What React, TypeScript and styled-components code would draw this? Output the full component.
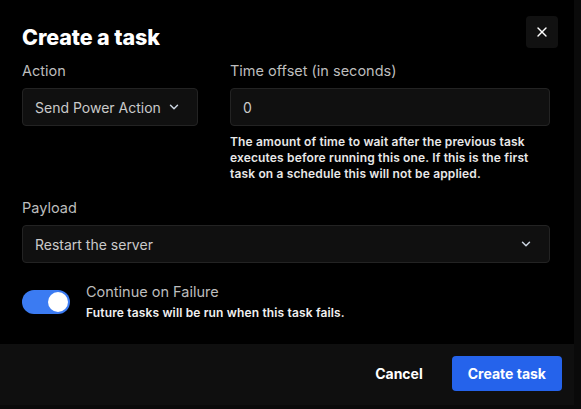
import React, { useState } from 'react';
import styled, { createGlobalStyle } from 'styled-components';
import { ChevronDown, X } from 'lucide-react';

const GlobalStyle = createGlobalStyle`
  html, body {
    margin: 0;
    padding: 0;
    background-color: #0a0a0a;
    font-family: Inter, "Liberation Sans", sans-serif;
    -webkit-font-smoothing: antialiased;
  }
  * {
    box-sizing: border-box;
  }
`;

const Modal = styled.div`
  position: relative;
  width: 574px;
  background-color: #000;
`;

const Body = styled.div`
  padding: 23px 24px 23px 22px;
`;

const Title = styled.h2`
  margin: 0 0 10px 0;
  font-size: 21.5px;
  line-height: 28px;
  font-weight: 800;
  letter-spacing: -0.1px;
  color: #fff;
`;

const CloseButton = styled.button`
  position: absolute;
  top: 16px;
  right: 16px;
  width: 32px;
  height: 32px;
  display: flex;
  align-items: center;
  justify-content: center;
  padding: 0;
  border: none;
  border-radius: 4px;
  background-color: #111;
  color: #fff;
  cursor: pointer;
`;

const Row = styled.div`
  display: grid;
  grid-template-columns: 176px 1fr;
  column-gap: 32px;
`;

const Field = styled.div<{ $top?: number }>`
  display: flex;
  flex-direction: column;
  margin-top: ${props => props.$top || 0}px;
`;

const Label = styled.label`
  font-size: 14.5px;
  line-height: 20px;
  color: #bdbdbd;
  margin-bottom: 7px;
`;

const Box = styled.div`
  height: 38px;
  display: flex;
  align-items: center;
  justify-content: space-between;
  padding: 0 16px 0 12px;
  background-color: #101010;
  border: 1px solid #232323;
  border-radius: 4px;
  font-size: 14px;
  color: #cacaca;
`;

const Chevron = styled(ChevronDown)`
  color: #cbd5e1;
  flex-shrink: 0;
`;

const Help = styled.p`
  margin: 8px 0 0 0;
  max-width: 310px;
  font-size: 12px;
  line-height: 16px;
  font-weight: 600;
  letter-spacing: 0.15px;
  color: #e8e8e8;
`;

const ToggleRow = styled.div`
  display: flex;
  align-items: center;
  gap: 16px;
  margin-top: 19px;
`;

const Toggle = styled.button<{ $on: boolean }>`
  position: relative;
  width: 48px;
  height: 24px;
  padding: 0;
  border: none;
  border-radius: 12px;
  background-color: ${props => (props.$on ? '#3b7bf2' : '#333')};
  cursor: pointer;
  flex-shrink: 0;
`;

const Knob = styled.span<{ $on: boolean }>`
  position: absolute;
  top: 2px;
  left: ${props => (props.$on ? '26px' : '2px')};
  width: 20px;
  height: 20px;
  border-radius: 50%;
  background-color: #fff;
`;

const ToggleText = styled.div`
  display: flex;
  flex-direction: column;
`;

const ToggleTitle = styled.span`
  font-size: 14.5px;
  line-height: 20px;
  color: #bdbdbd;
`;

const ToggleHint = styled.span`
  margin-top: 3px;
  font-size: 12px;
  line-height: 16px;
  font-weight: 600;
  letter-spacing: 0.15px;
  color: #f0f0f0;
`;

const Footer = styled.div`
  display: flex;
  justify-content: flex-end;
  align-items: center;
  gap: 13px;
  padding: 12px 12px 14px 12px;
  background-color: #0f0f0f;
`;

const Button = styled.button<{ $primary?: boolean }>`
  height: 35px;
  padding: 0 16px;
  border: none;
  border-radius: 4px;
  font-family: Inter, "Liberation Sans", sans-serif;
  font-size: 14px;
  font-weight: 700;
  color: #fff;
  background-color: ${props => (props.$primary ? '#2563eb' : 'transparent')};
  cursor: pointer;
`;

const App: React.FC = () => {
  const [continueOnFailure, setContinueOnFailure] = useState(true);

  return (
    <>
      <GlobalStyle />
      <Modal>
        <CloseButton aria-label="Close">
          <X size={16} strokeWidth={2} />
        </CloseButton>
        <Body>
          <Title>Create a task</Title>
          <Row>
            <Field>
              <Label>Action</Label>
              <Box>
                <span>Send Power Action</span>
                <Chevron size={14} strokeWidth={2.5} />
              </Box>
            </Field>
            <Field>
              <Label>Time offset (in seconds)</Label>
              <Box>
                <span>0</span>
              </Box>
              <Help>
                The amount of time to wait after the previous task executes before running this one. If this is
                the first task on a schedule this will not be applied.
              </Help>
            </Field>
          </Row>
          <Field $top={16}>
            <Label>Payload</Label>
            <Box>
              <span>Restart the server</span>
              <Chevron size={14} strokeWidth={2.5} />
            </Box>
          </Field>
          <ToggleRow>
            <Toggle $on={continueOnFailure} onClick={() => setContinueOnFailure(!continueOnFailure)}>
              <Knob $on={continueOnFailure} />
            </Toggle>
            <ToggleText>
              <ToggleTitle>Continue on Failure</ToggleTitle>
              <ToggleHint>Future tasks will be run when this task fails.</ToggleHint>
            </ToggleText>
          </ToggleRow>
        </Body>
        <Footer>
          <Button>Cancel</Button>
          <Button $primary>Create task</Button>
        </Footer>
      </Modal>
    </>
  );
};

export default App;
